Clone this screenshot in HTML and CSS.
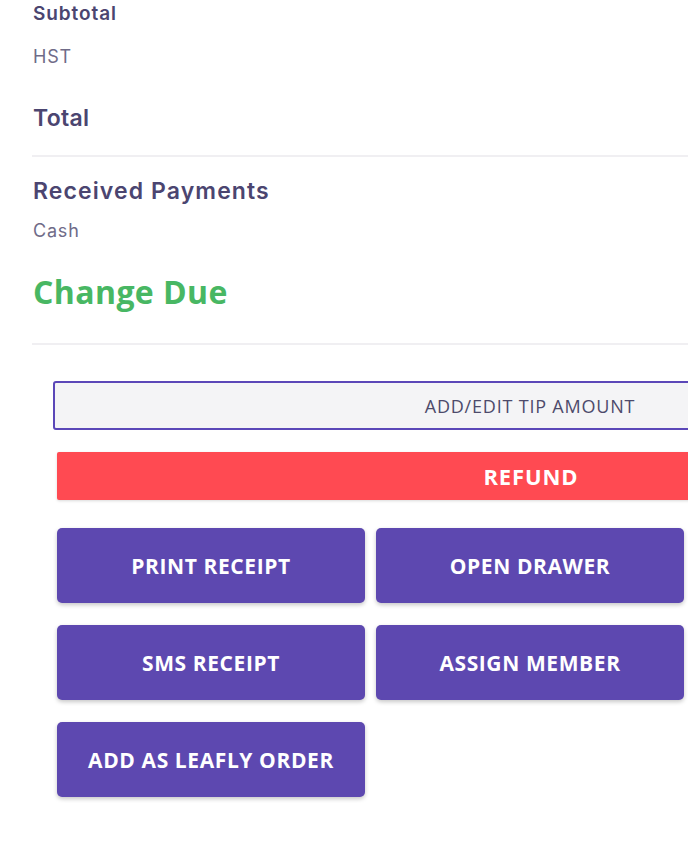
FILE: index.html
```html
<!DOCTYPE html>
<html>
<head>
<meta charset="utf-8">
<link rel="stylesheet" href="styles.css">
</head>
<body>
<div class="panel">
  <div class="summary">
    <div class="row-label strong sm">Subtotal</div>
    <div class="row-label light hst">HST</div>
    <div class="row-label strong lg total">Total</div>
  </div>
  <hr class="divider d1">
  <div class="payments">
    <div class="row-label strong md">Received Payments</div>
    <div class="row-label light cash">Cash</div>
    <div class="change">Change Due</div>
  </div>
  <hr class="divider d2">
  <div class="actions">
    <button class="tip">ADD/EDIT TIP AMOUNT</button>
    <button class="refund">REFUND</button>
    <div class="grid">
      <button class="act">PRINT RECEIPT</button>
      <button class="act">OPEN DRAWER</button>
      <button class="act">SMS RECEIPT</button>
      <button class="act">ASSIGN MEMBER</button>
      <button class="act">ADD AS LEAFLY ORDER</button>
    </div>
  </div>
</div>
</body>
</html>
```

FILE: styles.css
```css
html, body {
  margin: 0;
  padding: 0;
  background: #ffffff;
  overflow: hidden;
}
body {
  width: 688px;
  height: 847px;
}
.panel {
  width: 1000px;
  padding-left: 32px;
  padding-top: 2px;
  font-family: Inter, "Noto Sans", sans-serif;
}
.row-label {
  color: #4b4570;
  padding-left: 1px;
}
.strong { font-weight: 600; }
.sm { font-size: 19px; line-height: 24px; letter-spacing: 0.9px; }
.md { font-size: 23px; line-height: 28px; letter-spacing: 1.1px; }
.lg { font-size: 23px; line-height: 30px; letter-spacing: 0.3px; }
.light {
  color: #6f6b88;
  font-weight: 400;
  font-size: 18px;
  line-height: 24px;
  letter-spacing: 0.8px;
}
.hst { margin-top: 19px; }
.total { margin-top: 34px; }
.divider {
  border: 0;
  border-top: 2px solid #f0eff2;
  margin: 0;
}
.d1 { margin-top: 22px; }
.payments { padding-top: 20px; }
.cash { margin-top: 14px; }
.change {
  margin-top: 30px;
  padding-left: 1px;
  font-family: "Open Sans", sans-serif;
  font-weight: 700;
  font-size: 32px;
  line-height: 38px;
  letter-spacing: 0.4px;
  color: #48b763;
}
.d2 { margin-top: 32px; }
.actions {
  padding-top: 36px;
  padding-left: 21px;
  display: flex;
  flex-direction: column;
  align-items: flex-start;
}
button {
  font-family: "Open Sans", sans-serif;
  cursor: pointer;
  margin: 0;
  padding: 0;
}
.tip {
  width: 954px;
  height: 49px;
  border: 2px solid #5b47b8;
  border-radius: 3px;
  background: #f4f4f6;
  color: #4d4a6b;
  font-size: 18px;
  font-weight: 400;
  letter-spacing: 0.8px;
}
.refund {
  margin-top: 22px;
  margin-left: 4px;
  width: 948px;
  height: 48px;
  border: 0;
  border-radius: 2px;
  background: #ff4a52;
  color: #ffffff;
  font-size: 22px;
  font-weight: 700;
  letter-spacing: 0.9px;
  box-shadow: 0 1px 3px rgba(0,0,0,0.15);
}
.grid {
  margin-top: 28px;
  margin-left: 4px;
  width: 627px;
  display: grid;
  grid-template-columns: 308px 308px;
  column-gap: 11px;
  row-gap: 22px;
}
.act {
  height: 75px;
  border: 0;
  border-radius: 5px;
  background: #5d48b0;
  color: #ffffff;
  font-size: 21px;
  font-weight: 700;
  letter-spacing: 0.6px;
  box-shadow: 0 2px 4px rgba(0,0,0,0.22);
}
```
